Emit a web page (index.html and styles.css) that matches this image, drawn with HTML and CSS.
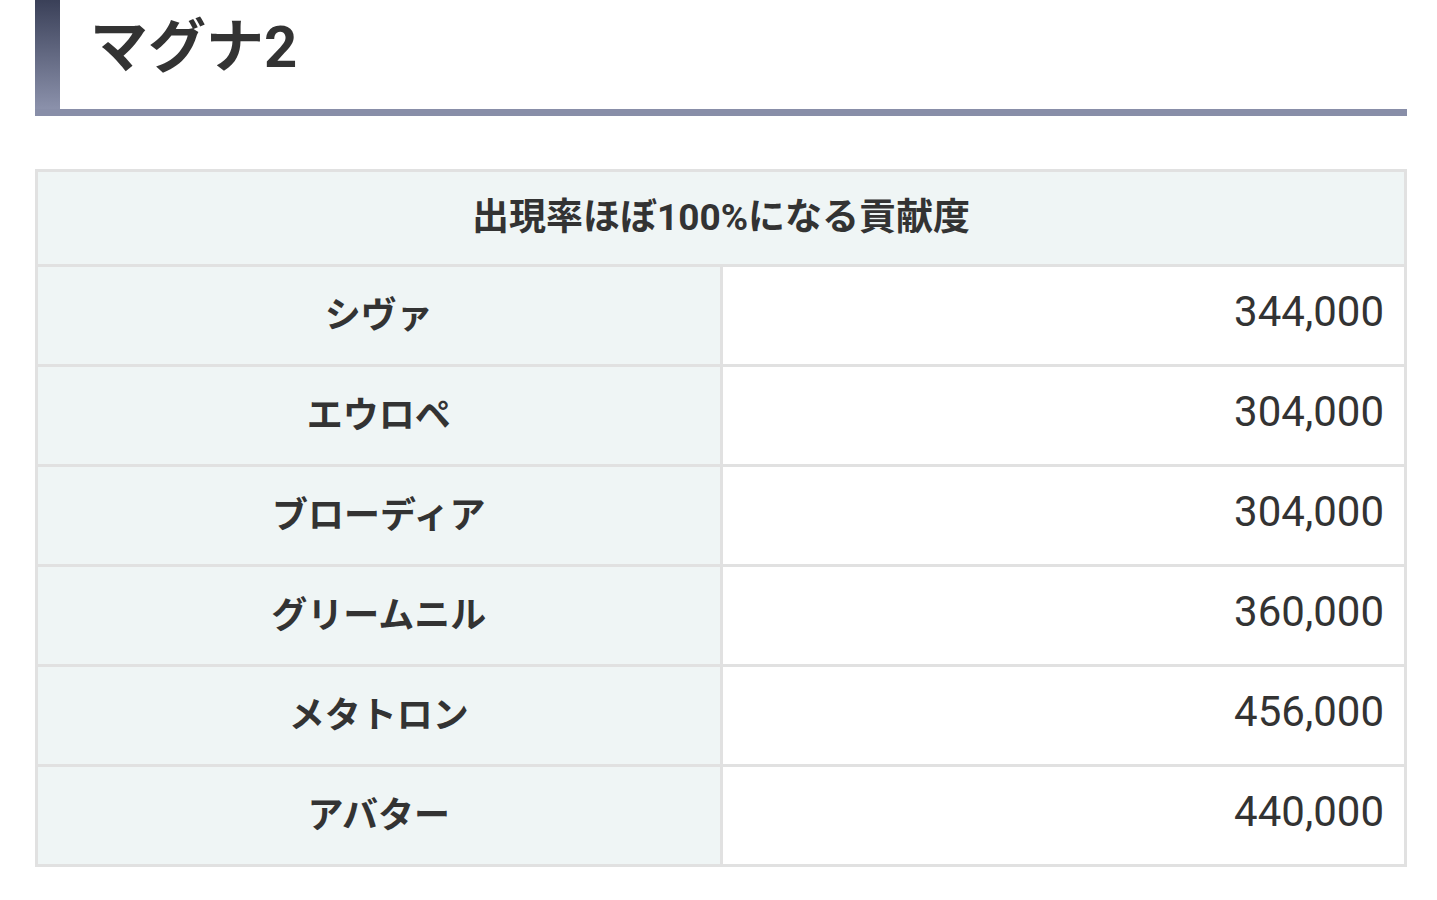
FILE: index.html
```html
<!DOCTYPE html>
<html lang="ja">
<head>
<meta charset="utf-8">
<link rel="stylesheet" href="styles.css">
</head>
<body>
<div class="page">
  <h2 class="title">マグナ2</h2>
  <table class="score">
    <thead>
      <tr><th colspan="2" class="head">出現率ほぼ100%になる貢献度</th></tr>
    </thead>
    <tbody>
      <tr><th class="name">シヴァ</th><td class="val">344,000</td></tr>
      <tr><th class="name">エウロペ</th><td class="val">304,000</td></tr>
      <tr><th class="name">ブローディア</th><td class="val">304,000</td></tr>
      <tr><th class="name">グリームニル</th><td class="val">360,000</td></tr>
      <tr><th class="name">メタトロン</th><td class="val">456,000</td></tr>
      <tr><th class="name">アバター</th><td class="val">440,000</td></tr>
    </tbody>
  </table>
</div>
</body>
</html>
```

FILE: styles.css
```css
html, body {
  margin: 0;
  padding: 0;
  background: #fff;
}
body {
  font-family: Roboto, "Noto Sans CJK JP", sans-serif;
  color: #333;
}
.page {
  padding: 0 30px 0 35px;
}
.title {
  position: relative;
  margin: 0;
  height: 109px;
  line-height: 94px;
  padding-left: 55px;
  font-size: 58px;
  font-weight: 700;
  color: #333;
  border-bottom: 7px solid #888ea8;
  box-sizing: content-box;
}
.title::before {
  content: "";
  position: absolute;
  left: 0;
  top: 0;
  bottom: 0;
  width: 25px;
  background: linear-gradient(to bottom, #3a4058, #8b91ab);
}
.score {
  margin-top: 53px;
  width: 100%;
  border-collapse: collapse;
  table-layout: fixed;
  border: 3px solid #e1e1e1;
}
.score th, .score td {
  border: 3px solid #e1e1e1;
  padding: 0 0 8px;
}
.score .head {
  height: 84px;
  background: #eff5f5;
  font-size: 37px;
  font-weight: 700;
  text-align: center;
}
.score .name {
  width: 50%;
  height: 89px;
  background: #eff5f5;
  font-size: 36px;
  font-weight: 700;
  text-align: center;
}
.score .val {
  height: 89px;
  background: #fff;
  font-size: 42px;
  font-weight: 400;
  text-align: right;
  padding-right: 20px;
}
```
